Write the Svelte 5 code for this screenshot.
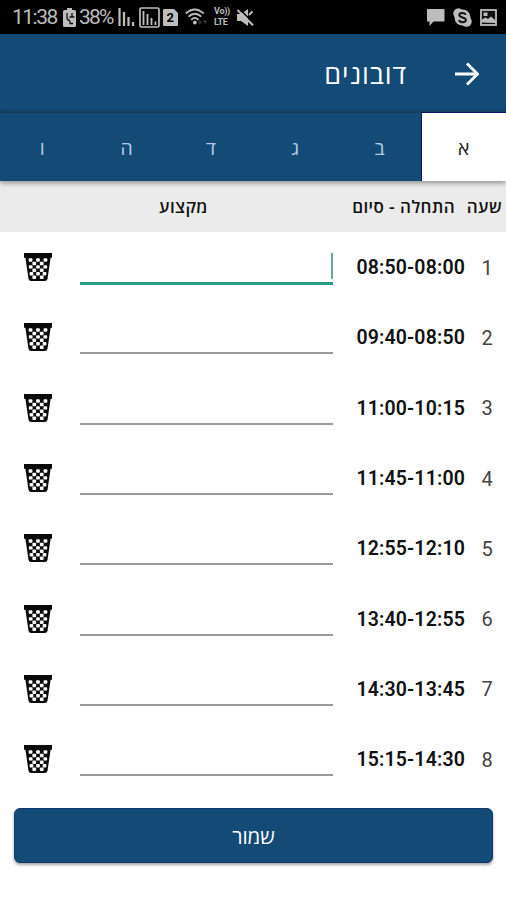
<script>
	let days = ["א", "ב", "ג", "ד", "ה", "ו"];
	let activeDay = $state(0);
	let focused = $state(0);

	let lessons = $state([
		{hours: "08:50-08:00", subject: ""},
		{hours: "09:40-08:50", subject: ""},
		{hours: "11:00-10:15", subject: ""},
		{hours: "11:45-11:00", subject: ""},
		{hours: "12:55-12:10", subject: ""},
		{hours: "13:40-12:55", subject: ""},
		{hours: "14:30-13:45", subject: ""},
		{hours: "15:15-14:30", subject: ""}
	]);

	// holes of the waste basket, one list of x positions per line
	const holes = [
		[8, 16, 24],
		[12, 20],
		[8.2, 16, 23.8],
		[12, 20],
		[9, 16, 23],
		[12, 20]
	];

	function clearLesson(i) {
		lessons[i].subject = "";
	}
</script>

<div class="screen">
	<div class="status">
		<span class="clock">11:38</span>
		<svg class="battery" width="13" height="19" viewBox="0 0 13 19">
			<path d="M4 0h5v2h2.500a1.500 1.500 0 0 1 1.500 1.500v14a1.500 1.500 0 0 1-1.500 1.500h-10A1.500 1.500 0 0 1 0 17.500v-14A1.500 1.500 0 0 1 1.500 2H4z" fill="#bdbdbd" />
			<path d="M4 5v4.500q0 3 3 3M9 5v4M6.500 9h5M7 13v2.500h3" fill="none" stroke="#111" stroke-width="1.300" />
		</svg>
		<span class="percent">38%</span>
		<svg class="signal" width="17" height="18" viewBox="0 0 17 18">
			<path d="M1.500 0v18M6 4v14M10.500 9v9M15 14v4" stroke="#bdbdbd" stroke-width="2.200" />
		</svg>
		<svg class="signal-box" width="21" height="21" viewBox="0 0 21 21">
			<rect x="1" y="1" width="19" height="19" rx="1.500" fill="none" stroke="#bdbdbd" stroke-width="1.700" />
			<path d="M4.500 4v14M8.500 7v11M12.500 11v7M16.500 14.500v3.500" stroke="#bdbdbd" stroke-width="1.800" />
		</svg>
		<svg class="sim" width="15" height="17" viewBox="0 0 15 17">
			<path d="M1 0h10l4 4v12a1 1 0 0 1-1 1H1a1 1 0 0 1-1-1V1a1 1 0 0 1 1-1z" fill="#bdbdbd" />
			<text x="7.300" y="13.300" text-anchor="middle" font-size="13" font-weight="700" font-family="Roboto, sans-serif" fill="#000">2</text>
		</svg>
		<svg class="wifi" width="23" height="18" viewBox="0 0 23 18">
			<g fill="none" stroke="#bdbdbd" stroke-width="1.800">
				<path d="M.8 5.500Q9.500-2.500 18.800 5.500" />
				<path d="M3.500 8.700Q9.800 2.700 16.300 8.700" />
				<path d="M6.200 11.800Q9.800 8 13.500 11.800" />
			</g>
			<circle cx="9.800" cy="14.500" r="1.900" fill="#bdbdbd" />
			<path d="M15 12l2 3.500h-4zM20 16l2-3.500h-4z" fill="#3c3c3c" />
		</svg>
		<span class="volte"><span>Vo))</span><span>LTE</span></span>
		<svg class="mute" width="17" height="17" viewBox="0 0 17 17">
			<path d="M0 5h4l7-5v17l-7-5H0z" fill="#bdbdbd" />
			<path d="M2.500 0L17 14.500" stroke="#000" stroke-width="1.500" />
			<path d="M.5 1L16 16.300M12 6l3.500-3.500" stroke="#bdbdbd" stroke-width="2" />
		</svg>
		<div class="notes">
			<svg width="18" height="17" viewBox="0 0 18 17">
				<path d="M0 0h17.500v12.500H6.500L2.500 17v-4.500H0z" fill="#bdbdbd" />
			</svg>
			<svg width="19" height="19" viewBox="0 0 19 19">
				<circle cx="9.500" cy="9.500" r="8" fill="#bdbdbd" />
				<circle cx="5.500" cy="5.500" r="5.200" fill="#bdbdbd" />
				<circle cx="13.500" cy="13.500" r="5.200" fill="#bdbdbd" />
				<path d="M12.800 6.800C12 4.300 6.300 4.200 6.300 7.100s6.600 1.800 6.600 4.900-6 2.800-6.900.1" fill="none" stroke="#111" stroke-width="2" />
			</svg>
			<svg width="17" height="17" viewBox="0 0 17 17">
				<rect x="1" y="1" width="15" height="15" fill="#111" stroke="#bdbdbd" stroke-width="1.800" />
				<path d="M2 13.500v-3l3.500-2 2.500 1.500 3-2.500 4 3.500v3z" fill="#bdbdbd" />
				<path d="M3.500 3.500h4v3.500h-4z" fill="#bdbdbd" />
			</svg>
		</div>
	</div>

	<header>
		<h1>דובונים</h1>
		<button class="back" aria-label="חזרה">
			<svg width="24" height="24" viewBox="0 0 24 24">
				<path d="M0 12h22M12 1.500L22.500 12 12 22.500" fill="none" stroke="#fff" stroke-width="2.800" />
			</svg>
		</button>
	</header>

	<nav>
		{#each days as day, i}
			<button class="tab" class:active={activeDay === i} onclick={() => activeDay = i}>{day}</button>
		{/each}
	</nav>

	<div class="head">
		<span class="col-subject">מקצוע</span>
		<span class="col-hours">התחלה - סיום</span>
		<span class="col-number">שעה</span>
	</div>

	<div class="rows">
		{#each lessons as lesson, i}
			<div class="row">
				<button class="trash" aria-label="מחק" onclick={() => clearLesson(i)}>
					<svg width="30" height="28" viewBox="0 0 32 30">
						<path d="M1 0h30v5h-1.500l-3.300 22.500a3 3 0 0 1-3 2.500H8.800a3 3 0 0 1-3-2.500L2.500 5H1z" fill="#0a0a0a" />
						{#each holes as line, n}
							{#each line as x}
								<rect x={x - 2} y={5.6 + n * 3.7} width="4" height="3.700" rx="1" fill="#fff" />
							{/each}
						{/each}
					</svg>
				</button>
				<div class="field" class:focused={focused === i}>
					<input type="text" dir="rtl" aria-label="מקצוע" bind:value={lesson.subject} onfocus={() => focused = i}>
					{#if focused === i}<span class="caret"></span>{/if}
				</div>
				<span class="hours">{lesson.hours}</span>
				<span class="number">{i + 1}</span>
			</div>
		{/each}
	</div>

	<button class="save">שמור</button>
</div>

<style>
	:global(body) {
		margin: 0;
		background: #fefefe;
	}

	button {
		border: none;
		padding: 0;
		background: none;
		font-family: inherit;
	}

	.screen {
		width: 506px;
		height: 900px;
		overflow: hidden;
		display: flex;
		flex-direction: column;
		background: #fefefe;
		font-family: Roboto, "Open Sans", sans-serif;
	}

	.status {
		height: 34px;
		flex: none;
		display: flex;
		align-items: center;
		padding: 0 9px 0 12px;
		box-sizing: border-box;
		background: #000;
		color: #bdbdbd;
		font-size: 21px;
	}
	.status svg {
		flex: none;
	}
	.clock {
		width: 51px;
		letter-spacing: -1.5px;
	}
	.percent {
		width: 36px;
		margin: 0 3px;
		letter-spacing: -1.8px;
	}
	.signal-box {
		margin-left: 4px;
	}
	.sim {
		margin-left: 3px;
	}
	.wifi {
		margin-left: 7px;
	}
	.volte {
		width: 18px;
		margin-left: 6px;
		display: flex;
		flex-direction: column;
		font-size: 9px;
		line-height: 11px;
		font-weight: 700;
		letter-spacing: -0.3px;
	}
	.mute {
		margin-left: 5px;
	}
	.notes {
		display: flex;
		align-items: center;
		gap: 8px;
		margin-left: auto;
	}

	header {
		height: 79px;
		flex: none;
		display: flex;
		align-items: center;
		justify-content: flex-end;
		padding-right: 27px;
		box-sizing: border-box;
		background: linear-gradient(#144a76 74px, #104064);
	}
	h1 {
		margin: 0 48px 0 0;
		color: #fff;
		font-size: 27px;
		font-weight: 500;
		letter-spacing: 0.9px;
	}
	.back {
		display: flex;
	}

	nav {
		height: 68px;
		flex: none;
		display: flex;
		direction: rtl;
		background: #144a76;
		box-shadow: 0 2px 5px rgba(0, 0, 0, 0.4);
		position: relative;
	}
	.tab {
		flex: 1;
		color: #b3cbe8;
		font-size: 19.5px;
		font-weight: 500;
	}
	.tab.active {
		background: #fff;
		color: #222;
		box-shadow: 0 0 0 1px #0b1560;
		clip-path: inset(-1px 0 0 -1px);
	}

	.head {
		height: 51px;
		flex: none;
		display: flex;
		align-items: center;
		box-sizing: border-box;
		padding: 0 4px 0 34px;
		background: #ebebeb;
		color: #111;
		font-size: 17px;
		font-weight: 600;
		letter-spacing: 0.4px;
	}
	.col-subject {
		width: 299px;
		text-align: center;
	}
	.col-hours {
		width: 122px;
		text-align: right;
		direction: rtl;
		white-space: nowrap;
	}
	.col-number {
		flex: 1;
		text-align: right;
	}

	.row {
		height: 70.3px;
		display: flex;
		align-items: center;
	}
	.trash {
		flex: none;
		display: flex;
		justify-content: center;
		width: 75px;
	}
	.field {
		position: relative;
		flex: none;
		width: 253px;
		height: 34px;
		margin-left: 5px;
		box-sizing: border-box;
		border-bottom: 2px solid #9a9a9a;
	}
	.field.focused {
		height: 36px;
		border-bottom: 3px solid #2c9a87;
	}
	input {
		width: 100%;
		height: 100%;
		padding: 0 4px;
		border: none;
		outline: none;
		box-sizing: border-box;
		background: none;
		font-size: 20px;
	}
	.caret {
		position: absolute;
		right: 0;
		top: 4px;
		width: 2px;
		height: 26px;
		background: #64a898;
	}
	.hours {
		flex: none;
		width: 132px;
		padding-top: 1px;
		text-align: right;
		color: #111;
		font-size: 19.5px;
		font-weight: 600;
		letter-spacing: 0.15px;
	}
	.number {
		flex: 1;
		padding: 1px 0 0 3px;
		text-align: center;
		color: #444;
		font-size: 20px;
	}

	.save {
		height: 55px;
		flex: none;
		margin: 14px 13px 0 14px;
		border: 1px solid #0f3a70;
		border-radius: 6px;
		background: #144a76;
		box-shadow: 0 2px 3px rgba(0, 0, 0, 0.35);
		color: #fff;
		font-size: 20.5px;
		font-weight: 500;
	}
</style>
